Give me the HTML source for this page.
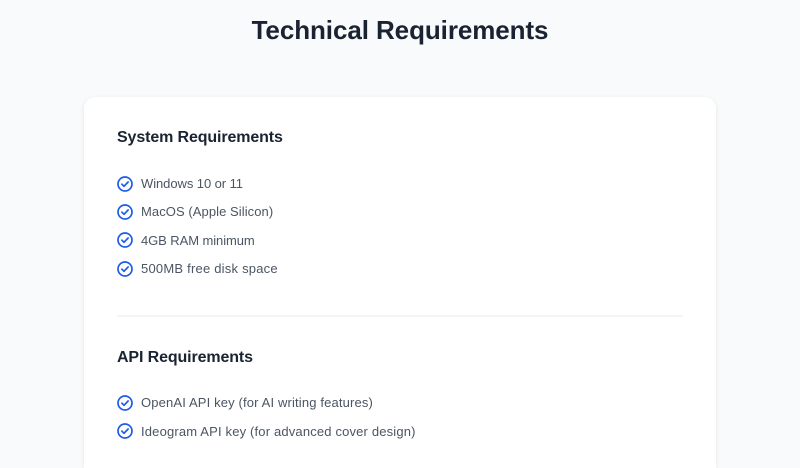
<!DOCTYPE html>
<html lang="en">
<head>
<meta charset="utf-8">
<title>Technical Requirements</title>
<style>
html,body{margin:0;padding:0;width:800px;height:468px;overflow:hidden;}
body{background:#f9fafb;font-family:"Liberation Sans",Arial,sans-serif;}
#p{position:absolute;left:0;top:0;width:800px;height:468px;overflow:hidden;background:#f9fafb;}
h1,h2,span{position:absolute;margin:0;white-space:nowrap;}
h1{left:0;width:800px;top:14px;text-align:center;font-size:26px;line-height:32px;font-weight:700;color:#1a2332;letter-spacing:-.08px;}
.card{position:absolute;left:84px;top:97px;width:632px;height:371px;background:#fff;border-radius:11px 11px 0 0;box-shadow:0 1px 4px rgba(0,0,0,.09);}
h2{left:117px;font-size:16px;line-height:20px;font-weight:700;color:#1a2332;letter-spacing:-.12px;}
.hr{position:absolute;left:117px;top:315px;width:566px;height:2px;background:#f3f4f6;}
span{left:141px;font-size:13px;line-height:16px;color:#4b5563;}
svg{position:absolute;left:117px;width:16px;height:16px;fill:none;stroke:#1d5be8;stroke-width:1.7;stroke-linecap:round;stroke-linejoin:round;}
</style>
</head>
<body>
<div id="p">
<h1>Technical Requirements</h1>
<div class="card"></div>
<h2 style="top:127.5px">System Requirements</h2>
<svg style="top:175.5px" viewBox="0 0 16 16"><circle cx="8" cy="8" r="7"/><path d="M4.9 8.2l2.1 2.1 4.1-4.3"/></svg><span style="top:176px;letter-spacing:-.07px">Windows 10 or 11</span>
<svg style="top:204px" viewBox="0 0 16 16"><circle cx="8" cy="8" r="7"/><path d="M4.9 8.2l2.1 2.1 4.1-4.3"/></svg><span style="top:204px;letter-spacing:.07px">MacOS (Apple Silicon)</span>
<svg style="top:232px" viewBox="0 0 16 16"><circle cx="8" cy="8" r="7"/><path d="M4.9 8.2l2.1 2.1 4.1-4.3"/></svg><span style="top:233px;letter-spacing:-.08px">4GB RAM minimum</span>
<svg style="top:261px" viewBox="0 0 16 16"><circle cx="8" cy="8" r="7"/><path d="M4.9 8.2l2.1 2.1 4.1-4.3"/></svg><span style="top:261px;letter-spacing:.22px">500MB free disk space</span>
<div class="hr"></div>
<h2 style="top:348px">API Requirements</h2>
<svg style="top:395px" viewBox="0 0 16 16"><circle cx="8" cy="8" r="7"/><path d="M4.9 8.2l2.1 2.1 4.1-4.3"/></svg><span style="top:395px;letter-spacing:.145px">OpenAI API key (for AI writing features)</span>
<svg style="top:423px" viewBox="0 0 16 16"><circle cx="8" cy="8" r="7"/><path d="M4.9 8.2l2.1 2.1 4.1-4.3"/></svg><span style="top:424px;letter-spacing:.165px">Ideogram API key (for advanced cover design)</span>
</div>
</body>
</html>
